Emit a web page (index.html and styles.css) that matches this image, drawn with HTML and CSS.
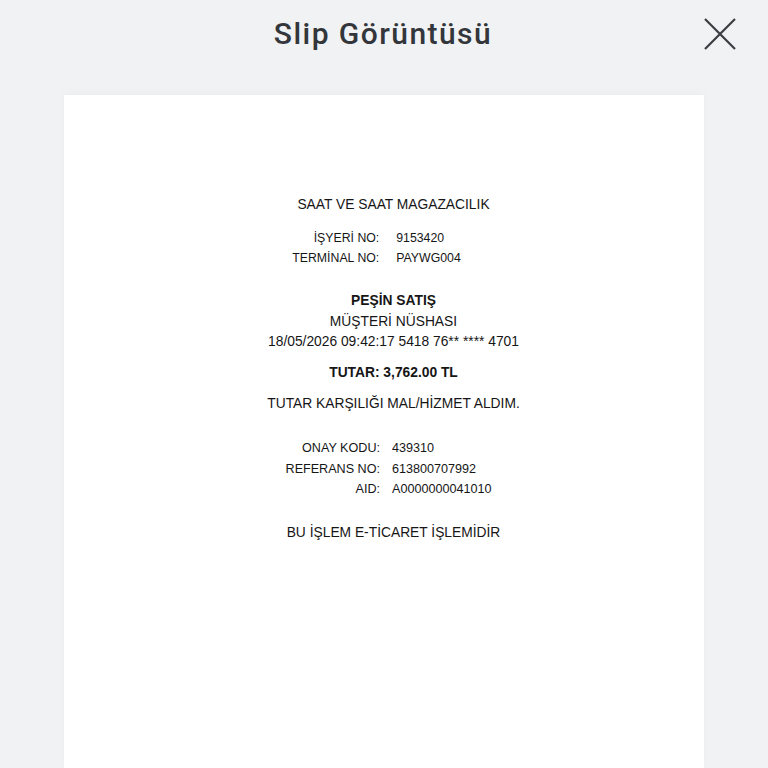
FILE: index.html
```html
<!DOCTYPE html>
<html lang="tr">
<head>
<meta charset="utf-8">
<link rel="stylesheet" href="styles.css">
</head>
<body>
<div class="page">
  <header class="header">
    <div></div>
    <h1 class="title">Slip Görüntüsü</h1>
    <button class="close" aria-label="Kapat">
      <svg width="32" height="32" viewBox="0 0 32 32"><path d="M1 1 L31 31 M31 1 L1 31" stroke="#3a3d42" stroke-width="2.2" fill="none"/></svg>
    </button>
  </header>
  <main class="card">
    <div class="line merchant">SAAT VE SAAT MAGAZACILIK</div>
    <div class="kv kv1">
      <span class="k">İŞYERİ NO:</span><span class="v">9153420</span>
      <span class="k">TERMİNAL NO:</span><span class="v">PAYWG004</span>
    </div>
    <div class="block sale">
      <div class="line bold">PEŞİN SATIŞ</div>
      <div class="line">MÜŞTERİ NÜSHASI</div>
      <div class="line">18/05/2026 09:42:17 5418 76** **** 4701</div>
    </div>
    <div class="line bold amount">TUTAR: 3,762.00 TL</div>
    <div class="line accept">TUTAR KARŞILIĞI MAL/HİZMET ALDIM.</div>
    <div class="kv kv2">
      <span class="k">ONAY KODU:</span><span class="v">439310</span>
      <span class="k">REFERANS NO:</span><span class="v">613800707992</span>
      <span class="k">AID:</span><span class="v">A0000000041010</span>
    </div>
    <div class="line ecom">BU İŞLEM E-TİCARET İŞLEMİDİR</div>
  </main>
</div>
</body>
</html>
```
FILE: styles.css
```css
* { box-sizing: border-box; }
html, body { margin: 0; padding: 0; }
body {
  background: #f1f2f4;
  width: 768px;
  height: 768px;
  overflow: hidden;
  font-family: "Liberation Sans", Arial, sans-serif;
}
.page {
  display: flex;
  flex-direction: column;
  height: 768px;
}
.header {
  height: 68px;
  display: grid;
  grid-template-columns: 1fr auto 1fr;
  align-items: center;
}
.title {
  margin: 0;
  font-family: Roboto, "Noto Sans", sans-serif;
  font-weight: 500;
  font-size: 30px;
  color: #33363b;
  letter-spacing: 1.45px;
  transform: translate(-1px, -1px);
}
.close {
  justify-self: end;
  margin-right: 32px;
  padding: 0;
  border: 0;
  background: none;
  width: 32px;
  height: 32px;
  display: flex;
}
.card {
  margin: 27px 64px 0;
  flex: 1;
  background: #ffffff;
  box-shadow: 0 -3px 8px rgba(0, 0, 0, 0.025);
  padding-top: 100px;
  padding-left: 19px;
  display: flex;
  flex-direction: column;
  align-items: center;
  color: #161616;
  font-size: 13.8px;
}
.line {
  line-height: 20.5px;
  text-align: center;
  white-space: nowrap;
}
.merchant { line-height: 20px; }
.bold { font-weight: 700; }
.kv {
  display: grid;
  grid-template-columns: auto auto;
  line-height: 20.5px;
}
.kv .k { text-align: right; }
.kv1 { margin-top: 12.5px; column-gap: 17px; font-size: 12.3px; transform: translateX(-17px); }
.kv2 { margin-top: 23.5px; column-gap: 12px; font-size: 12.6px; transform: translateX(-5px); }
.sale { margin-top: 22.5px; display: flex; flex-direction: column; align-items: center; }
.amount { margin-top: 10.5px; }
.accept { margin-top: 10.5px; }
.ecom { margin-top: 23.5px; }
```
